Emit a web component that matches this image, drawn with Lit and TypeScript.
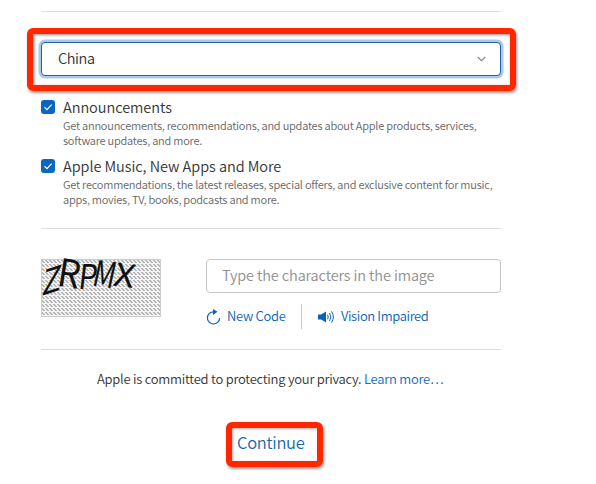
import { LitElement, html, css, svg } from "lit";
import { customElement } from "lit/decorators.js";

interface Choice { title: string; lines: string[]; }

const choices: Choice[] = [
  { title: "Announcements", lines: ["Get announcements, recommendations, and updates about Apple products, services,", "software updates, and more."] },
  { title: "Apple Music, New Apps and More", lines: ["Get recommendations, the latest releases, special offers, and exclusive content for music,", "apps, movies, TV, books, podcasts and more."] },
];

const glyphs = [
  { c: "Z", m: "0.92 -0.3 -0.1 1 0 37", s: 35 },
  { c: "R", m: "0.92 0.14 -0.16 1 15 26.5", s: 38 },
  { c: "P", m: "0.86 0 -0.12 1 36.5 29.5", s: 34 },
  { c: "M", m: "0.78 0.1 -0.22 1 50 26.5", s: 35 },
  { c: "X", m: "1.15 0.14 -0.2 1 71 26.5", s: 31.5 },
];

@customElement("app-root")
export class AppRoot extends LitElement {
  static styles = css`
    :host { display: block; width: 596px; height: 484px; overflow: hidden; background: #fff; color: #333;
      font-family: "Noto Sans CJK SC", "Noto Sans", sans-serif; font-weight: 350; }
    .page { width: 460px; margin-left: 41px; padding-top: 11px; display: flex; flex-direction: column; }
    .rule { height: 1px; background: #dedede; flex: none; }
    .marker { margin: 16px -15px 0 -14px; height: 51px; border: 6px solid #ff2600; border-radius: 6px; padding: 0 9px 0 8px;
      display: flex; align-items: center; box-shadow: 1px 2px 3px #0006, inset 1px 1px 3px #0007; }
    .select { box-sizing: border-box; flex: 1; height: 34px; margin-bottom: 1px; border: 1px solid #1d63ab; border-radius: 4px;
      box-shadow: 0 0 0 2.5px #abc9ea; background: #fff; display: flex; align-items: center; justify-content: space-between; padding: 0 14px 0 16px; }
    .value { font-size: 14.5px; letter-spacing: -.4px; margin-bottom: 3px; }
    .choices { margin-top: 6px; height: 131px; }
    .choice { display: flex; height: 59px; gap: 8px; }
    .box { width: 14px; height: 14px; border-radius: 3px; background: #0a66c2; margin-top: 3px; flex: none; display: block; }
    .title { font-size: 14.5px; line-height: 20px; letter-spacing: -.05px; white-space: nowrap; padding-bottom: 1px; }
    .line { font-size: 11px; line-height: 15px; letter-spacing: -.22px; color: #666; white-space: nowrap; }
    .captcha { margin-top: 30px; display: flex; justify-content: space-between; height: 90px; }
    .picture { width: 120px; height: 58px; display: block; overflow: visible; }
    .side { width: 295px; }
    .input { box-sizing: border-box; height: 34px; border: 1px solid #c6c6c6; border-radius: 4px; padding: 0 15px 3px; display: flex; align-items: center; color: #909090; font-size: 14.5px; letter-spacing: -.12px; white-space: nowrap; }
    .links { margin-top: 11px; height: 25px; display: flex; align-items: center; color: #0a63b8; font-size: 13px; letter-spacing: -.38px; white-space: nowrap; }
    .links span { margin-bottom: 2px; }
    .links svg { flex: none; }
    .links .new { margin-left: 6px; width: 59px; letter-spacing: -.3px; }
    .links .vision { margin-left: 5px; }
    .sep { width: 1px; height: 25px; background: #c8c8c8; margin: 0 16px 0 15px; }
    .privacy { margin-top: 19px; height: 20px; line-height: 20px; padding-left: 56px; font-size: 13px; letter-spacing: -.24px; white-space: nowrap; }
    .privacy a { color: #0f6cc4; }
    .continue { box-sizing: border-box; margin: 33px 0 0 185px; width: 97px; height: 45px; border: 6px solid #ff2600; border-radius: 6px;
      box-shadow: 1px 2px 3px #0006, inset 1px 1px 3px #0005; color: #1767ae; font-size: 16.5px; letter-spacing: -.3px; line-height: 28px; padding-left: 5px; white-space: nowrap; }
  `;

  render() {
    return html`<div class="page">
      <div class="rule"></div>
      <div class="marker"><div class="select"><span class="value">China</span>
        <svg width="9" height="6" viewBox="0 0 9 6" fill="none" stroke="#888" stroke-width="1.2"><path d="M.7 1 4.5 4.7 8.3 1"/></svg></div></div>
      <div class="choices">${choices.map((c) => html`<div class="choice">
        <svg class="box" viewBox="0 0 14 14" fill="none" stroke="#fff" stroke-width="1.2"><path d="M3.5 7.3 6 9.7 10.6 4.6"/></svg>
        <div><div class="title">${c.title}</div>${c.lines.map((l) => html`<div class="line">${l}</div>`)}</div></div>`)}</div>
      <div class="rule"></div>
      <div class="captcha">
        <svg class="picture" viewBox="0 0 120 58">
          <defs><pattern id="weave" width="4" height="4" patternUnits="userSpaceOnUse"><path d="M0 1H2V2H3V3H4V4H2V3H1V2H0Z" fill="#b4b4b4" shape-rendering="crispEdges"/></pattern></defs>
          <rect width="120" height="58" fill="#f3f3f3"/><rect width="120" height="58" fill="url(#weave)"/>
          <rect x=".5" y=".5" width="119" height="57" fill="none" stroke="#ccc"/>
          ${glyphs.map((g) => svg`<text transform="matrix(${g.m})" font-size=${g.s} font-weight="400" fill="#111">${g.c}</text>`)}
        </svg>
        <div class="side">
          <div class="input"><span>Type the characters in the image</span></div>
          <div class="links">
            <svg width="15" height="16" viewBox="0 0 15 16" fill="none" stroke="#0a63b8" stroke-width="1.2"><path d="M8 2.8A6.1 6.1 0 1 0 13.6 9"/><path d="M7 0 11.5 2.8 7 6Z" fill="#0a63b8" stroke="none"/></svg>
            <span class="new">New Code</span><i class="sep"></i>
            <svg width="18" height="14" viewBox="0 0 18 14" fill="none" stroke="#0a63b8"><path d="M0 4.5H3.2L8 1.5V12.5L3.2 9.5H0Z" fill="#0a63b8" stroke="none"/><path d="M9.5 4.7Q11 7 9.5 9.3M11.5 3Q14.2 7 11.5 11M13.5 1.3Q17.2 7 13.5 12.7"/></svg>
            <span class="vision">Vision Impaired</span>
          </div>
        </div>
      </div>
      <div class="rule"></div>
      <div class="privacy"><span>Apple is committed to protecting your privacy.</span> <a>Learn more…</a></div>
      <div class="continue">Continue</div>
    </div>`;
  }
}
